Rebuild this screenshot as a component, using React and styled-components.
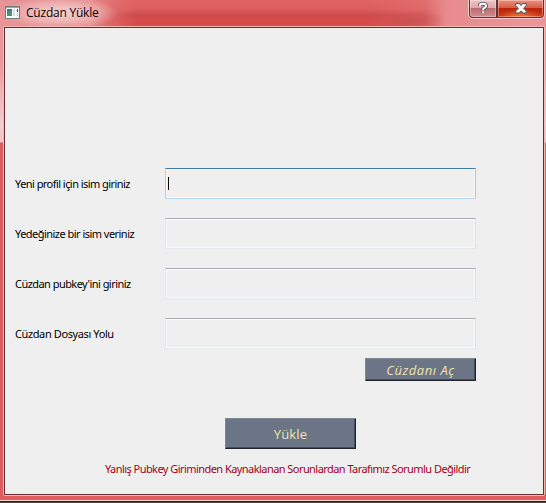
import React from "react";
import styled, { createGlobalStyle } from "styled-components";

const GlobalStyle = createGlobalStyle`
  * { box-sizing: border-box; }
  body { margin: 0; overflow: hidden; background: #4a3033; }
`;

const Window = styled.div`
  width: 546px;
  height: 503px;
  display: flex;
  flex-direction: column;
  padding: 0 1px 7px 3px;
  overflow: hidden;
  background:
    linear-gradient(#e05e5e, #e05e5e) 0 496px / 100% 4px no-repeat,
    linear-gradient(#fbd5d5, #fbd5d5) 0 500px / 100% 1px no-repeat,
    linear-gradient(#2c1719, #2c1719) 0 501px / 100% 1px no-repeat,
    linear-gradient(#5a4548, #5a4548) 0 502px / 100% 1px no-repeat,
    linear-gradient(#e99499 0, #e6989b 60px, #f5cdd2 125px, #f3c3c8 142px, #c8605f 143px, #df5c5c 146px, #df5c5c 100%);
`;

const TitleBar = styled.header`
  display: flex;
  align-items: flex-start;
  height: 26px;
  flex: none;
  margin: 0 -1px 0 -3px;
  padding-left: 5px;
  background:
    radial-gradient(ellipse 58px 16px at 61px 13px, #f5d2d2 0, #f2c4c4aa 55%, #f0b0b000 100%),
    radial-gradient(ellipse 34px 10px at 412px 21px, #b9484a77, #b9484a00 100%),
    linear-gradient(90deg, #e79598 0, #e78c8e 90px, #e27a7b88 112px, #de606000 135px, #de606000 370px, #e27a7b66 425px, #e78b8e 446px, #e9979b 100%),
    linear-gradient(#e06464 0, #de5d5d 9px, #cc4b4d 15px, #d74b4b 20px, #d94b4b 26px);
`;

const AppIcon = styled.svg`
  display: block;
  flex: none;
  margin-top: 6px;
`;

const Title = styled.h1`
  margin: 5px 0 0 6px;
  font: 400 12px/16px "Open Sans", "Noto Sans", sans-serif;
  letter-spacing: ${(p) => p.$spacing};
  color: #080404;
  white-space: nowrap;
`;

const Controls = styled.div`
  display: flex;
  height: 19px;
  margin-left: auto;
  margin-right: 1px;
  padding: 0 1px 1px;
  border-radius: 0 0 5px 5px;
  background: #f8c9c9;
`;

const Control = styled.button`
  display: flex;
  justify-content: center;
  align-items: flex-start;
  width: ${(p) => p.$width};
  height: 18px;
  padding: 1px 0 0;
  border: 1px solid #633033;
  border-top: 0;
  border-radius: ${(p) => p.$radius};
  background: ${(p) => p.$fill};
  box-shadow: inset 0 0 0 1px #ffffff55;
`;

const Glyph = styled.svg`
  display: block;
  flex: none;
`;

const Content = styled.main`
  flex: none;
  height: 470px;
  border: 1px solid #f4b9b9;
  border-radius: 2px;
  background: #efefef;
`;

const Form = styled.form`
  display: flex;
  flex-direction: column;
  height: 468px;
  border: 1px solid #692d31;
  padding: 140px 67px 0 10px;
  font: 11px/14px "Noto Sans", "Open Sans", sans-serif;
`;

const Field = styled.label`
  display: grid;
  grid-template-columns: 150px 311px;
  align-items: center;
  height: 31px;
  margin-bottom: 19px;
  flex: none;
`;

const Caption = styled.span`
  padding-top: 1px;
  color: #000;
  letter-spacing: ${(p) => p.$spacing};
  white-space: nowrap;
`;

const Input = styled.span`
  display: flex;
  align-items: center;
  height: 31px;
  padding-left: 2px;
  border: 1px solid;
  border-color: ${(p) => (p.$active ? "#3d7bad #a4c9e3 #b7d9ed #b5cfe7" : "#abadb3 #dbdfe6 #e3e9ef #e2e3ea")};
  border-radius: 1px;
  box-shadow: inset 0 0 0 1px #fafafa;
`;

const Caret = styled.i`
  width: 1px;
  height: 13px;
  background: #000;
`;

const Button = styled.button`
  flex: none;
  width: ${(p) => p.$width};
  height: ${(p) => p.$height};
  margin: ${(p) => p.$margin};
  padding: 0;
  border: 1px solid;
  border-color: #7d8999 #20242c #20242c #7d8999;
  box-shadow: inset -1px -1px #464e5b;
  background: #6b7585;
  color: #f1e3b0;
  font: ${(p) => (p.$italic ? "italic" : "normal")} 13px/18px "Comic Sans MS", "Open Sans", sans-serif;
  letter-spacing: ${(p) => p.$spacing};
`;

const Warning = styled.p`
  margin: 13px 0 0 90px;
  color: #a3001c;
  letter-spacing: ${(p) => p.$spacing};
  white-space: nowrap;
`;

const fields = [
  ["Yeni profil için isim giriniz", "-0.55px"],
  ["Yedeğinize bir isim veriniz", "-0.53px"],
  ["Cüzdan pubkey'ini giriniz", "-0.55px"],
  ["Cüzdan Dosyası Yolu", "-0.39px"],
];

export default function App() {
  return (
    <>
      <GlobalStyle />
      <Window>
        <TitleBar>
          <AppIcon width="15" height="13" viewBox="0 0 15 13">
            <rect x=".5" y=".5" width="14" height="12" fill="#fff" stroke="#717b7e" />
            <path d="M1 1.5h13" stroke="#9ea8a9" />
            <rect x="2" y="3" width="5" height="7" fill="#3e7a8a" />
            <path d="M2 10V7l5-3v6z" fill="#4b9670" />
            <path d="M8 3h2v7H8z" fill="#d5e1e6" />
            <path d="M12.5 3v3" stroke="#39454a" />
            <path d="M12.5 7v3" stroke="#bbc7ca" />
          </AppIcon>
          <Title $spacing="-0.22px">Cüzdan Yükle</Title>
          <Controls>
            <Control type="button" aria-label="Yardım" $width="28px" $radius="0 0 0 4px"
              $fill="linear-gradient(#edc4c5 0, #dda7a9 8px, #b96b6e 8px, #d28b8d 100%)">
              <Glyph width="10" height="14" viewBox="0 0 10 14">
                <path d="M2 5V4Q2 2.8 5 2.8T8 5Q8 6.5 5.3 7.7V9M5.3 10v2" fill="none" stroke="#4c5367" strokeWidth="3.8" />
                <path d="M2 5V4Q2 2.8 5 2.8T8 5Q8 6.5 5.3 7.7V9M5.3 10v2" fill="none" stroke="#fff" strokeWidth="2" />
              </Glyph>
            </Control>
            <Control type="button" aria-label="Kapat" $width="47px" $radius="0 0 4px 0"
              $fill="radial-gradient(ellipse 22px 8px at 50% 100%, #f07838, transparent), linear-gradient(#e9917f 0, #d65b44 8px, #b92309 8px, #cb3717 100%)">
              <Glyph width="12" height="13" viewBox="0 0 12 13">
                <path d="M.7 2.5h3.6L6 4.5l1.7-2h3.6v2L8.6 7.2l2.7 2.8v2H7.7L6 10l-1.7 2H.7v-2l2.7-2.8L.7 4.5z" fill="#f4f5f7" stroke="#505365" />
              </Glyph>
            </Control>
          </Controls>
        </TitleBar>
        <Content>
          <Form>
            {fields.map(([caption, spacing], index) => (
              <Field key={caption}>
                <Caption $spacing={spacing}>{caption}</Caption>
                <Input $active={index === 0}>{index === 0 && <Caret />}</Input>
              </Field>
            ))}
            <Button type="button" $width="111px" $height="23px" $margin="-10px 0 0 350px" $italic $spacing="0.55px">Cüzdanı Aç</Button>
            <Button type="button" $width="131px" $height="31px" $margin="37px 0 0 210px" $spacing="0.2px">Yükle</Button>
            <Warning $spacing="-0.555px">Yanlış Pubkey Giriminden Kaynaklanan Sorunlardan Tarafımız Sorumlu Değildir</Warning>
          </Form>
        </Content>
      </Window>
    </>
  );
}
